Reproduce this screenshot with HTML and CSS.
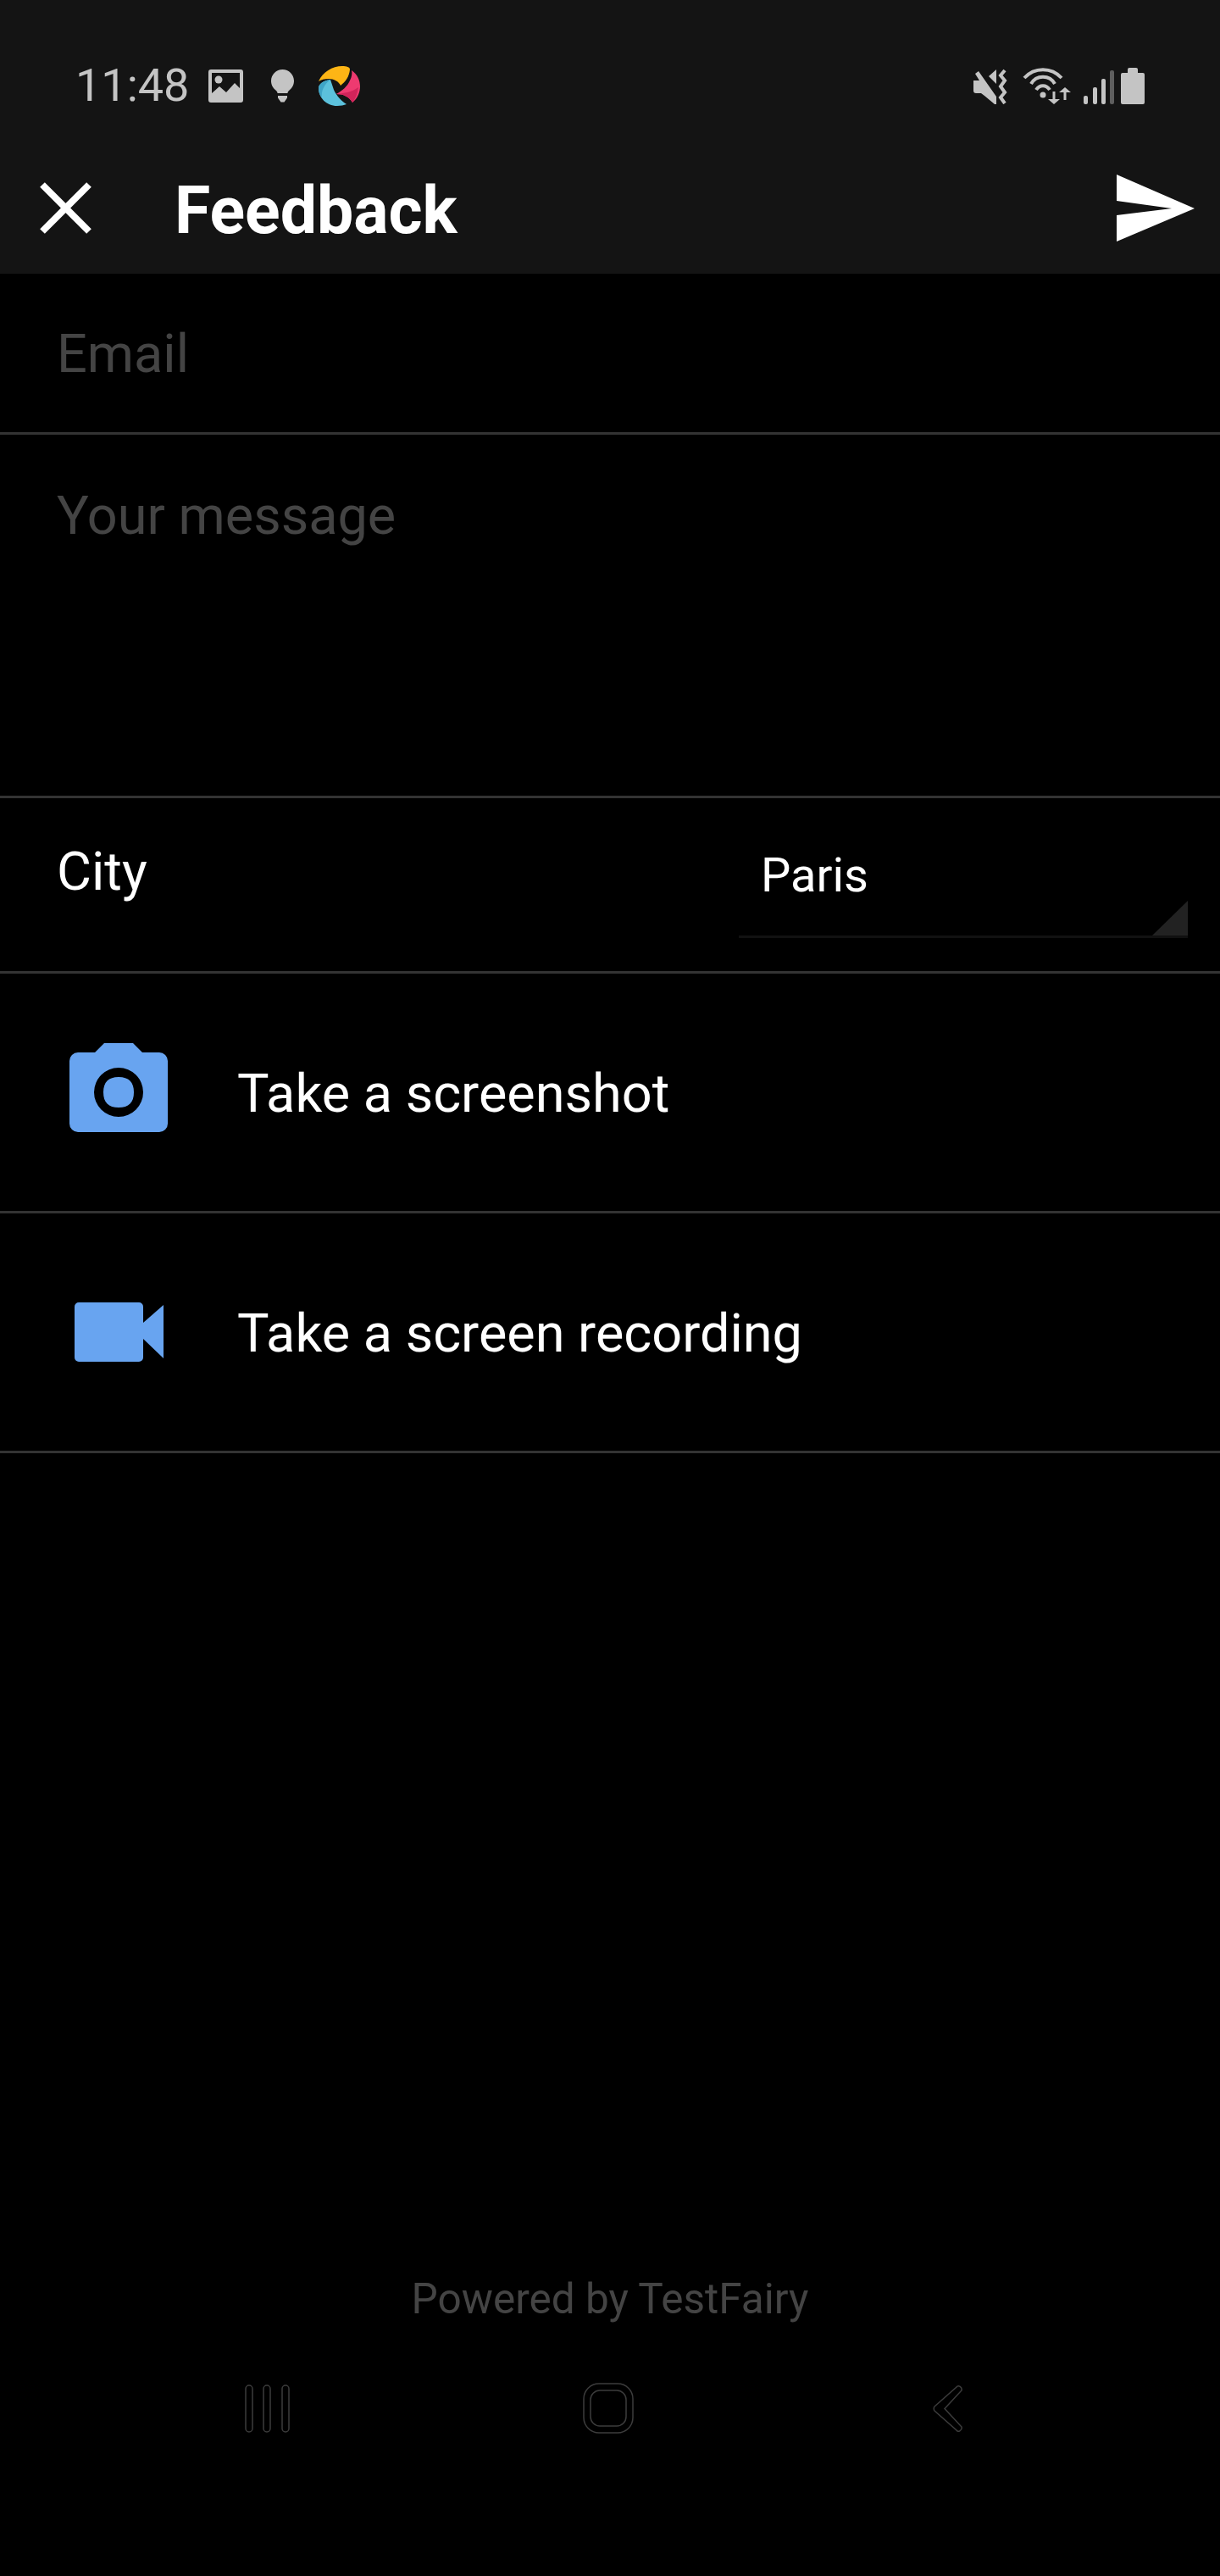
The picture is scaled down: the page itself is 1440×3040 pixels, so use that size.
FILE: index.html
```html
<!DOCTYPE html>
<html>
<head>
<title>Feedback</title>
<link rel="stylesheet" href="styles.css">
</head>
<body>
  <div class="top">
    <div class="status">
      <span class="time">11:48</span>
      <svg class="ic-image" viewBox="0 0 41 39"><path fill="#c4c4c4" fill-rule="evenodd" d="M3 0h35a3 3 0 0 1 3 3v33a3 3 0 0 1-3 3H3a3 3 0 0 1-3-3V3a3 3 0 0 1 3-3zM4 4v24l9-8 8 7 10-11 6 6V4z"/><circle cx="12" cy="12" r="4.500" fill="#c4c4c4"/></svg>
      <svg class="ic-bulb" viewBox="0 0 27 39"><path fill="#c4c4c4" d="M13.500 0C6 0 0 6 0 13.500c0 5 2.500 8.500 5.500 11 1.500 1.200 2 2.500 2 3.500h12c0-1 .5-2.300 2-3.500 3-2.500 5.500-6 5.500-11C27 6 21 0 13.500 0zM8 31h11v2.500L15.500 38.500h-4L8 33.500z"/></svg>
      <svg class="ic-logo" viewBox="0 0 49 48">
        <path fill="#fdb515" d="M0 19C5 8 16 1 28 1c5 0 9 1 9 4-1 9-5 14-11 19-2-5-8-8-14-8-5 0-9 1-12 3z"/>
        <path fill="#ee3a70" d="M39 6c7 5 10 12 10 19s-3 14-9 19c-4-7-11-10-19-10 7-4 13-9 16-16 2-4 3-8 2-12z"/>
        <path fill="#d1245a" d="M21 34c8-1 18-2 26-8-1 7-3 13-7 18-4-7-11-10-19-10z"/>
        <path fill="#5cc1dc" d="M14 17C6 18 0 22 0 27c0 11 9 21 22 21 4 0 8-1 11-2-8-5-14-13-16-20-1-3-2-6-3-9z"/>
        <path fill="#3fa5c7" d="M14 17C6 18 0 22 0 27c0 4 1 8 4 11-1-7 2-15 10-21z"/>
      </svg>
      <div class="status-right">
        <svg class="ic-mute" viewBox="0 0 41 42"><g fill="#c4c4c4"><path d="M0 14h7L2 6l4-3 21 30v9h-2L13 32l-4-3H3a3 3 0 0 1-3-3z"/><path d="M18 9l9-8v17z"/></g><path fill="none" stroke="#c4c4c4" stroke-width="4" d="M37 2l-5 6 5 6-5 7 5 7-5 6 5 7"/></svg>
        <svg class="ic-wifi" viewBox="0 0 58 43"><g fill="none" stroke="#c4c4c4" stroke-width="4"><path d="M2 12C14-1 34-1 46 12"/><path d="M10 19C16 8 32 8 38 19"/><path d="M16 26C20 19.500 28 19.500 32 26"/></g><circle cx="24" cy="32" r="3.500" fill="#c4c4c4"/><path fill="#c4c4c4" d="M35.500 28h3v9H44l-7 6-7-6h5.500zM48.500 38v-9H43l7-6 7 6h-5.500v9z"/></svg>
        <svg class="ic-signal" viewBox="0 0 36 40"><g fill="#c4c4c4"><rect x="0" y="30" width="5" height="10" rx="2"/><rect x="11" y="20" width="5" height="20" rx="2"/><rect x="21" y="10" width="5" height="30" rx="2"/></g><rect x="31" y="0" width="5" height="40" rx="2" fill="#5e5e5e"/></svg>
        <svg class="ic-battery" viewBox="0 0 28 43"><path fill="#c4c4c4" d="M8 2a2 2 0 0 1 2-2h8a2 2 0 0 1 2 2v4h6a2 2 0 0 1 2 2v33a2 2 0 0 1-2 2H2a2 2 0 0 1-2-2V8a2 2 0 0 1 2-2h6z"/></svg>
      </div>
    </div>
    <div class="toolbar">
      <svg class="ic-close" viewBox="0 0 61 61"><path fill="none" stroke="#fff" stroke-width="8" d="M3 3l55 55M58 3L3 58"/></svg>
      <h1 class="title">Feedback</h1>
      <svg class="ic-send" viewBox="0 0 92 79"><path fill="#fff" d="M0 0l92 40L0 79V48l65-8L0 31z"/></svg>
    </div>
  </div>

  <div class="field field-email">Email</div>
  <div class="field field-message">Your message</div>

  <div class="city-row">
    <span class="city-label">City</span>
    <div class="select">
      <span class="select-value">Paris</span>
      <span class="select-arrow"></span>
    </div>
  </div>

  <div class="action">
    <span class="action-icon">
      <svg class="ic-camera" viewBox="0 0 116 105"><path fill="#68a4f0" fill-rule="evenodd" d="M30 11L41 0h34l11 11h20a10 10 0 0 1 10 10v74a10 10 0 0 1-10 10H10A10 10 0 0 1 0 95V21a10 10 0 0 1 10-10zM58 29a29 29 0 1 0 0 58 29 29 0 0 0 0-58zm0 11c-12 0-18 6-18 18s6 18 18 18 18-6 18-18-6-18-18-18z"/></svg>
    </span>
    <span class="action-text">Take a screenshot</span>
  </div>
  <div class="action">
    <span class="action-icon">
      <svg class="ic-video" viewBox="0 0 105 70"><path fill="#68a4f0" d="M5 0h71a5 5 0 0 1 5 5v60a5 5 0 0 1-5 5H5a5 5 0 0 1-5-5V5a5 5 0 0 1 5-5zM81 24L105 3v63L81 43z"/></svg>
    </span>
    <span class="action-text">Take a screen recording</span>
  </div>

  <div class="footer">
    <div class="powered">Powered by TestFairy</div>
    <div class="navbar">
      <svg class="ic-recent" viewBox="0 0 54 57"><g fill="none" stroke="#3c3c3c" stroke-width="1.500"><rect x="1" y="1" width="8" height="55" rx="4"/><rect x="22" y="1" width="8" height="55" rx="4"/><rect x="44" y="1" width="8" height="55" rx="4"/></g></svg>
      <svg class="ic-home" viewBox="0 0 60 60"><g fill="none" stroke="#3c3c3c" stroke-width="1.500"><rect x="1" y="1" width="58" height="58" rx="18"/><rect x="9" y="9" width="42" height="42" rx="11"/></g></svg>
      <svg class="ic-back" viewBox="0 0 36 57"><path fill="none" stroke="#3c3c3c" stroke-width="1.500" d="M28 3c2-3 7 0 6 4L14 28.500 34 50c1 4-4 7-6 4L2 31c-1-1-1-4 0-5z"/></svg>
    </div>
  </div>
</body>
</html>
```

FILE: styles.css
```css
body {
  font-family: Roboto, sans-serif;
  background-color: #000;
  color: #fff;
  margin: 0;
  padding: 0;
  height: 3040px;
  display: flex;
  flex-direction: column;
}

svg {
  display: block;
  flex: none;
}

.top {
  background-color: #141414;
  height: 323px;
  flex: none;
}

/* status bar */
.status {
  height: 78px;
  padding: 62px 89px 0 89px;
  display: flex;
  align-items: center;
}

.time {
  font-size: 54px;
  font-weight: 400;
  color: #c4c4c4;
  line-height: 48px;
  width: 157px;
}

.ic-image { width: 41px; height: 39px; }
.ic-bulb { width: 27px; height: 39px; margin-left: 33px; }
.ic-logo { width: 49px; height: 48px; margin-left: 29px; }

.status-right {
  margin-left: auto;
  display: flex;
  align-items: flex-end;
}

.ic-mute { width: 41px; height: 42px; }
.ic-wifi { width: 58px; height: 43px; margin-left: 17px; }
.ic-signal { width: 36px; height: 40px; margin-left: 14px; }
.ic-battery { width: 28px; height: 43px; margin-left: 8px; }

/* toolbar */
.toolbar {
  height: 155px;
  margin-top: 28px;
  padding: 0 30px 0 47px;
  display: flex;
  align-items: center;
}

.ic-close { width: 61px; height: 61px; }

.title {
  margin: 6px 0 0 98px;
  font-size: 77px;
  font-weight: 700;
  line-height: 80px;
}

.ic-send { width: 92px; height: 79px; margin-left: auto; }

/* form fields */
.field {
  color: #444;
  font-size: 63px;
  padding-left: 67px;
  border-bottom: 3px solid #333;
  flex: none;
}

.field-email {
  height: 187px;
  line-height: 190px;
}

.field-message {
  height: 426px;
  line-height: 192px;
}

.city-row {
  height: 204px;
  border-bottom: 3px solid #333;
  padding-left: 67px;
  display: flex;
  flex: none;
}

.city-label {
  font-size: 63px;
  line-height: 174px;
}

.select {
  margin: 0 38px 0 auto;
  width: 530px;
  height: 165px;
  box-sizing: border-box;
  border-bottom: 3px solid #111;
  padding-left: 26px;
  position: relative;
}

.select-value {
  font-size: 56px;
  line-height: 182px;
}

.select-arrow {
  position: absolute;
  right: 0;
  bottom: 0;
  width: 0;
  height: 0;
  border-style: solid;
  border-width: 0 0 41px 42px;
  border-color: transparent transparent #222 transparent;
}

/* action rows */
.action {
  height: 280px;
  border-bottom: 3px solid #333;
  display: flex;
  align-items: center;
  flex: none;
}

.action-icon {
  width: 280px;
  padding-left: 82px;
  box-sizing: border-box;
  flex: none;
}

.ic-camera { width: 116px; height: 105px; margin-bottom: 11px; }
.ic-video { width: 105px; height: 70px; margin-left: 6px; }

.action-text {
  font-size: 63px;
  padding-top: 3px;
}

/* footer */
.footer {
  margin-top: auto;
  padding-bottom: 168px;
}

.powered {
  color: #444;
  font-size: 49.500px;
  text-align: center;
  line-height: 54px;
}

.navbar {
  margin-top: 72px;
  padding-left: 289px;
  display: flex;
  align-items: center;
}

.ic-recent { width: 54px; height: 57px; }
.ic-home { width: 60px; height: 60px; margin-left: 345px; }
.ic-back { width: 36px; height: 57px; margin-left: 353px; }
```
